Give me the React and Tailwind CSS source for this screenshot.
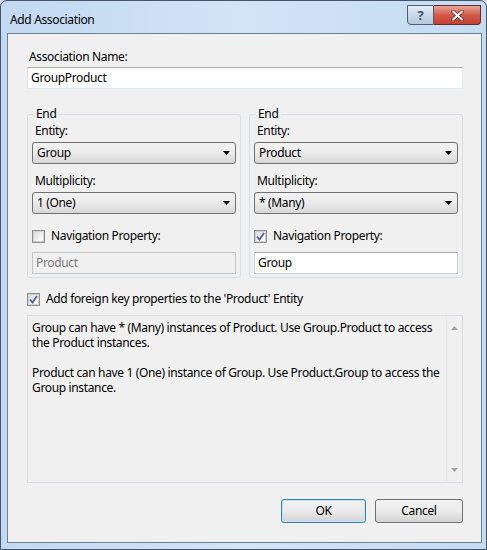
import React from "react";

const FONT = { fontFamily: '"Segoe UI", "Noto Sans", "Open Sans", sans-serif' };

function Arrow() {
  return (
    <svg width="7" height="4" viewBox="0 0 7 4" className="shrink-0">
      <path d="M0 0 H7 L3.5 4 Z" fill="#000" />
    </svg>
  );
}

function Combo({ value }) {
  return (
    <div className="h-[22px] flex items-center justify-between pl-[4px] pr-[5px] rounded-[3px] border border-[#707070] bg-gradient-to-b from-[#f2f2f2] via-[#ebebeb] to-[#d7d7d7] text-[12px] text-black">
      <span>{value}</span>
      <Arrow />
    </div>
  );
}

function Check({ checked }) {
  return (
    <div className="w-[13px] h-[13px] border border-[#8e8f8f] bg-white flex items-center justify-center shrink-0">
      <div className="w-[11px] h-[11px] bg-gradient-to-br from-[#dcdcdc] to-[#ffffff] border border-[#d0d0d0] flex items-center justify-center">
        {checked && (
          <svg width="9" height="9" viewBox="0 0 9 9">
            <path d="M1 4.5 L3.5 7.5 L8 1" fill="none" stroke="#4a5f97" strokeWidth="1.8" />
          </svg>
        )}
      </div>
    </div>
  );
}

function EndGroup({ entity, mult, checked, nav, disabled }) {
  return (
    <div className="relative flex-1 border border-[#d5dfe5] rounded-[3px] pt-[8px] pb-[3px] px-[4px]">
      <span className="absolute -top-[9px] left-[5px] px-[3px] bg-[#f0f0f0] leading-[16px] text-[12px]">End</span>
      <div className="h-[16px] leading-[16px] px-[3px]">Entity:</div>
      <div className="mt-[3px]">
        <Combo value={entity} />
      </div>
      <div className="mt-[9px] h-[16px] leading-[16px] px-[3px]">Multiplicity:</div>
      <div className="mt-[3px]">
        <Combo value={mult} />
      </div>
      <div className="mt-[14px] h-[16px] flex items-center gap-[6px]">
        <Check checked={checked} />
        <span className="leading-[16px]">Navigation Property:</span>
      </div>
      <div
        className={
          "mt-[8px] h-[22px] flex items-center px-[3px] border " +
          (disabled
            ? "bg-[#f0f0f0] border-[#c2c6c9] text-[#7a7a7a]"
            : "bg-white border-[#c9ced4] border-t-[#abadb3] text-black")
        }
      >
        {nav}
      </div>
    </div>
  );
}

export default function App() {
  return (
    <div style={FONT} className="w-[487px] h-[550px] bg-[#d8dde2] text-[12px] tracking-[-0.35px] text-black">
      <div className="w-[487px] h-[550px] flex flex-col rounded-t-[7px] border border-[#45556a] bg-gradient-to-r from-[#c2d9f1] via-[#d3e4f6] to-[#c4dbf2] pl-[6px] pr-[4px] pb-[6px]">
        {/* Title bar */}
        <div className="h-[32px] flex items-start justify-between">
          <div className="pt-[11px] pl-[3px] text-[12px] leading-[16px] text-black">Add Association</div>
          <div className="flex mt-[4px] mr-[1px]">
            <div className="w-[27px] h-[20px] border border-[#4d5d72] rounded-bl-[4px] bg-gradient-to-b from-[#e4edf7] via-[#c9d8ea] to-[#b4c8e0] flex items-center justify-center text-[13px] font-bold text-[#43536a] leading-none">
              ?
            </div>
            <div className="w-[47px] h-[20px] border border-l-0 border-[#6b2a2a] rounded-br-[4px] bg-gradient-to-b from-[#e7a59a] via-[#d25a4a] to-[#c2402f] flex items-center justify-center">
              <svg width="13" height="11" viewBox="0 0 13 11">
                <path d="M2 1.5 L11 9.5 M11 1.5 L2 9.5" stroke="#5a1d17" strokeWidth="3.6" strokeLinecap="round" />
                <path d="M2 1.5 L11 9.5 M11 1.5 L2 9.5" stroke="#ffffff" strokeWidth="2.2" strokeLinecap="round" />
              </svg>
            </div>
          </div>
        </div>

        {/* Client area */}
        <div className="flex-1 flex flex-col border border-[#6d8099] bg-[#f0f0f0] pt-[15px] pl-[19px] pr-[18px]">
          <div className="h-[16px] leading-[16px] pl-[2px]">Association Name:</div>
          <div className="mt-[2px] h-[22px] flex items-center px-[3px] bg-white border border-[#e3e9ef] border-t-[#abadb3] border-l-[#e2e3ea]">
            GroupProduct
          </div>

          <div className="mt-[25px] flex gap-[8px]">
            <EndGroup entity="Group" mult="1 (One)" checked={false} nav="Product" disabled />
            <EndGroup entity="Product" mult="* (Many)" checked nav="Group" />
          </div>

          <div className="mt-[13px] h-[16px] flex items-center gap-[6px]">
            <Check checked />
            <span className="leading-[16px]">Add foreign key properties to the 'Product' Entity</span>
          </div>

          <div className="mt-[8px] h-[168px] flex border border-[#d5dfe5]">
            <div className="flex-1 pt-[4px] pl-[4px] leading-[15px]">
              <p>Group can have * (Many) instances of Product. Use Group.Product to access the Product instances.</p>
              <p className="mt-[15px]">Product can have 1 (One) instance of Group. Use Product.Group to access the Group instance.</p>
            </div>
            <div className="w-[16px] border-l border-[#e8e8e8] flex flex-col justify-between items-center py-[10px]">
              <svg width="7" height="4" viewBox="0 0 7 4">
                <path d="M0 4 H7 L3.5 0 Z" fill="#a3a3a3" />
              </svg>
              <svg width="7" height="4" viewBox="0 0 7 4">
                <path d="M0 0 H7 L3.5 4 Z" fill="#a3a3a3" />
              </svg>
            </div>
          </div>

          <div className="mt-[16px] flex justify-end gap-[9px]">
            <div className="w-[85px] h-[24px] rounded-[3px] border border-[#3c7fb1] bg-gradient-to-b from-[#f2f2f2] via-[#ebebeb] to-[#d3d3d3] flex items-center justify-center shadow-[inset_0_0_0_1px_#b8e6f8]">
              OK
            </div>
            <div className="w-[88px] h-[24px] rounded-[3px] border border-[#707070] bg-gradient-to-b from-[#f2f2f2] via-[#ebebeb] to-[#d3d3d3] flex items-center justify-center">
              Cancel
            </div>
          </div>
        </div>
      </div>
    </div>
  );
}
